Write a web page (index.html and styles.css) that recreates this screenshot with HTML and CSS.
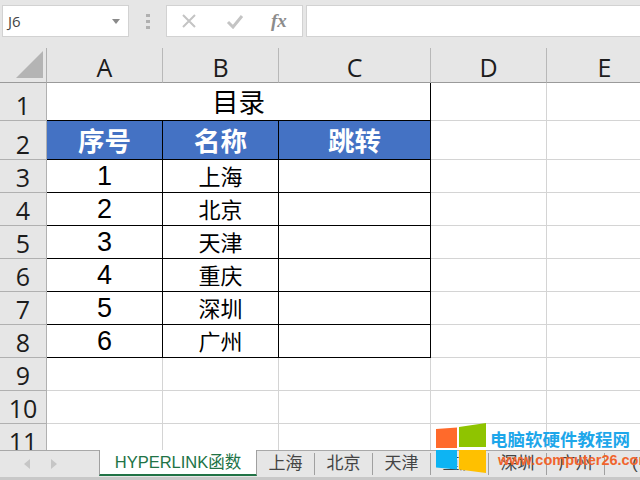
FILE: index.html
```html
<!DOCTYPE html>
<html lang="zh">
<head>
<meta charset="utf-8">
<title>目录</title>
<link rel="stylesheet" href="styles.css">
</head>
<body>
<div class="app">
  <div class="fbar">
    <div class="namebox"><span>J6</span><svg class="caret" width="8" height="5" viewBox="0 0 8 5"><path d="M0 0h8L4 5z" fill="#8a8a8a"/></svg></div>
    <div class="grip"><i></i><i></i><i></i></div>
    <div class="btns">
      <svg width="16" height="16" viewBox="0 0 16 16"><path d="M2 2l12 12M14 2L2 14" stroke="#c4c4c4" stroke-width="2" fill="none"/></svg>
      <svg width="18" height="16" viewBox="0 0 18 16"><path d="M2 9l5 5L16 3" stroke="#c4c4c4" stroke-width="3" fill="none"/></svg>
      <span class="fx">fx</span>
    </div>
    <div class="finput"></div>
  </div>
  <div class="sheet">
    <div class="corner"><svg width="27" height="27" viewBox="0 0 27 27"><path d="M27 0v27H0z" fill="#b4b4b4"/></svg></div>
    <div class="ch">A</div><div class="ch">B</div><div class="ch">C</div><div class="ch">D</div><div class="ch">E</div>

    <div class="rh">1</div><div class="c title">目录</div><div class="c"></div><div class="c"></div>

    <div class="rh">2</div><div class="c hd">序号</div><div class="c hd">名称</div><div class="c hd">跳转</div><div class="c"></div><div class="c"></div>

    <div class="rh">3</div><div class="c t num">1</div><div class="c t">上海</div><div class="c t"></div><div class="c"></div><div class="c"></div>
    <div class="rh">4</div><div class="c t num">2</div><div class="c t">北京</div><div class="c t"></div><div class="c"></div><div class="c"></div>
    <div class="rh">5</div><div class="c t num">3</div><div class="c t">天津</div><div class="c t"></div><div class="c"></div><div class="c"></div>
    <div class="rh">6</div><div class="c t num">4</div><div class="c t">重庆</div><div class="c t"></div><div class="c"></div><div class="c"></div>
    <div class="rh">7</div><div class="c t num">5</div><div class="c t">深圳</div><div class="c t"></div><div class="c"></div><div class="c"></div>
    <div class="rh">8</div><div class="c t num">6</div><div class="c t">广州</div><div class="c t"></div><div class="c"></div><div class="c"></div>

    <div class="rh">9</div><div class="c"></div><div class="c"></div><div class="c"></div><div class="c"></div><div class="c"></div>
    <div class="rh">10</div><div class="c"></div><div class="c"></div><div class="c"></div><div class="c"></div><div class="c"></div>
    <div class="rh r11">11</div><div class="c"></div><div class="c"></div><div class="c"></div><div class="c"></div><div class="c"></div>
  </div>
  <div class="tabs">
    <div class="nav"><svg width="6" height="10" viewBox="0 0 6 10"><path d="M6 0v10L0 5z" fill="#c6c6c6"/></svg><svg width="6" height="10" viewBox="0 0 6 10"><path d="M0 0v10l6-5z" fill="#c6c6c6"/></svg></div>
    <div class="tab active">HYPERLINK函数</div>
    <div class="tab">上海</div>
    <div class="tab">北京</div>
    <div class="tab">天津</div>
    <div class="tab">重庆</div>
    <div class="tab">深圳</div>
    <div class="tab">广州</div>
    <div class="more">(</div>
  </div>
  <div class="mark">
    <svg class="logo" width="50" height="50" viewBox="0 0 50 50">
      <path d="M0 5L21 3.500V24H0z" fill="#ff6a2b"/>
      <path d="M23 3L50 -1V23H23z" fill="#8fc400"/>
      <path d="M0 26H21V45.500L0 43.500z" fill="#0db4f3"/>
      <path d="M23 26H50V49L23 45.500z" fill="#ffc000"/>
    </svg>
    <div class="mt">电脑软硬件教程网</div>
    <div class="mu">www.computer26.com</div>
  </div>
</div>
</body>
</html>
```
FILE: styles.css
```css
* { box-sizing: border-box; }
html, body { margin: 0; padding: 0; }
body { width: 640px; height: 480px; overflow: hidden; background: #fff; font-family: "Liberation Sans", "Noto Sans CJK SC", sans-serif; }
.app { position: relative; width: 640px; height: 480px; overflow: hidden; display: flex; flex-direction: column; }

.fbar { height: 48px; flex: none; background: #e6e6e6; display: flex; align-items: flex-start; padding: 5px 0 0 2px; }
.namebox { width: 127px; height: 32px; background: #fff; border: 1px solid #d2d2d2; display: flex; align-items: center; justify-content: space-between; padding: 0 8px 0 5px; font: 15px "Open Sans", "Liberation Sans", sans-serif; color: #444; }
.caret { margin-top: 1px; }
.grip { width: 37px; height: 32px; display: flex; flex-direction: column; justify-content: center; align-items: center; gap: 3px; }
.grip i { display: block; width: 4px; height: 3px; background: #b0b0b0; }
.btns { width: 137px; height: 32px; background: #fff; border: 1px solid #d2d2d2; display: flex; align-items: center; gap: 29px; padding-left: 14px; margin-right: 3px; }
.fx { font: italic bold 19px "Liberation Serif", serif; color: #8c8c8c; margin-left: -2px; }
.finput { flex: 1; height: 32px; background: #fff; border: 1px solid #d2d2d2; border-right: 0; }

.sheet { flex: none; height: 402px; display: grid; grid-template-columns: 47px 116px 116px 152px 116px 116px; grid-template-rows: 35px 38px 39px repeat(8, 33px) 33px; overflow: hidden; background: #fff; }
.corner { background: #e6e6e6; border-right: 1px solid #b0b0b0; border-bottom: 1px solid #9a9a9a; display: flex; align-items: flex-end; justify-content: flex-end; padding: 0 3px 4px 0; }
.ch { background: #e6e6e6; border-bottom: 1px solid #9a9a9a; border-right: 1px solid #b8b8b8; display: flex; align-items: flex-end; justify-content: center; font: 25px/29px "Open Sans", "Liberation Sans", sans-serif; color: #1c1c1c; }
.rh { background: #e6e6e6; border-right: 1px solid #b0b0b0; border-bottom: 1px solid #b0b0b0; display: flex; align-items: flex-end; justify-content: center; padding-bottom: 2px; font: 25px/1 "Open Sans", "Liberation Sans", sans-serif; color: #1c1c1c; }
.c { border-right: 1px solid #d4d4d4; border-bottom: 1px solid #d4d4d4; display: flex; align-items: center; justify-content: center; font-size: 24px; color: #000; }
.title { grid-column: span 3; border-right: 1px solid #000; border-bottom: 1px solid #000; padding-bottom: 3px; font-size: 26.500px; }
.hd { background: #4472c4; color: #fff; font-weight: 700; font-size: 26.500px; padding-bottom: 2px; border-right: 1px solid #000; border-bottom: 1px solid #000; }
.t { border-right: 1px solid #000; border-bottom: 1px solid #000; padding-bottom: 3px; font-size: 22px; }
.num { font-size: 27px; padding: 1px 0 0; }

.tabs { flex: none; height: 30px; position: relative; background: #e6e6e6; border-top: 1px solid #a8a8a8; border-bottom: 3px solid #c8c8c8; display: flex; align-items: flex-start; font-size: 17px; color: #444; }
.nav { flex: none; width: 99px; height: 26px; display: flex; align-items: center; gap: 21px; padding-left: 24px; }
.tab { flex: none; width: 58px; height: 22px; margin-top: 2px; line-height: 22px; text-align: center; border-right: 1px solid #a0a0a0; white-space: nowrap; }
.tab.active { width: 158px; height: 26px; margin-top: -1px; font-size: 16.500px; line-height: 25px; background: #fff; color: #217346; border-left: 1px solid #a0a0a0; border-right: 1px solid #a0a0a0; border-bottom: 2px solid #217346; }
.more { margin-left: 27px; margin-top: 2px; line-height: 22px; }

.mark { position: absolute; left: 436px; top: 424px; width: 204px; height: 50px; }
.logo { position: absolute; left: 0; top: 0; overflow: visible; }
.mt { position: absolute; left: 54px; top: 5px; font-size: 17.500px; line-height: 22px; font-weight: 700; color: #1ea7ea; white-space: nowrap; }
.mu { position: absolute; left: 62px; top: 27px; font: 700 14.500px/18px "Liberation Sans", sans-serif; color: #f0642d; white-space: nowrap; }
```
